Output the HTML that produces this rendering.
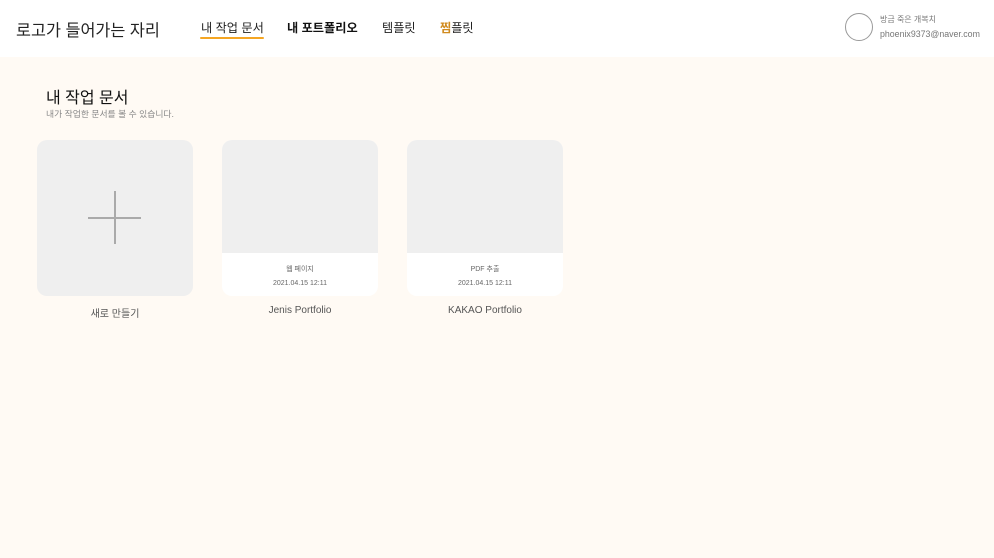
<!DOCTYPE html>
<html><head><meta charset="utf-8"><style>
*{margin:0;padding:0;box-sizing:border-box}
body{width:994px;height:558px;background:#fffaf4;font-family:"Liberation Sans","Noto Sans CJK KR",sans-serif;position:relative;overflow:hidden;color:#222}
.hdr{position:absolute;left:0;top:0;width:994px;height:57px;background:#fff}
.a{position:absolute;white-space:nowrap}
.card{position:absolute;top:140px;width:156px;height:156px;border-radius:10px;overflow:hidden;background:#fff}
.card .g{height:113px;background:#efefef}
.card .t{text-align:center;font-size:7px;color:#666;margin-top:10px;line-height:14px}
.lbl{position:absolute;top:305px;width:156px;text-align:center;font-size:10px;color:#555}
</style></head><body>
<div class="hdr"></div>
<div class="a" style="left:16px;top:17px;font-size:16.3px;color:#222">로고가 들어가는 자리</div>
<div class="a" style="left:201px;top:18px;font-size:12.2px;color:#222">내 작업 문서</div>
<div class="a" style="left:200px;top:37px;width:64px;height:2px;background:#f5a623;border-radius:1px"></div>
<div class="a" style="left:287px;top:18px;font-size:12.2px;font-weight:bold;color:#111">내 포트폴리오</div>
<div class="a" style="left:382px;top:18px;font-size:12.2px;color:#222">템플릿</div>
<div class="a" style="left:440px;top:18px;font-size:12.2px;color:#222"><span style="color:#d08a1e;font-weight:bold">찜</span>플릿</div>
<div class="a" style="left:845px;top:13px;width:28px;height:28px;border:1px solid #999;border-radius:50%"></div>
<div class="a" style="left:880px;top:14px;font-size:8px;color:#777">방금 죽은 개복치</div>
<div class="a" style="left:880px;top:29px;font-size:8.8px;color:#777">phoenix9373@naver.com</div>
<div class="a" style="left:46px;top:84px;font-size:16px;color:#111">내 작업 문서</div>
<div class="a" style="left:46px;top:107px;font-size:8.8px;color:#888">내가 작업한 문서를 볼 수 있습니다.</div>
<div class="card" style="left:37px;background:#efefef">
<div class="a" style="left:51px;top:77px;width:53px;height:1.5px;background:#aaa"></div>
<div class="a" style="left:77px;top:51px;width:1.5px;height:53px;background:#aaa"></div>
</div>
<div class="lbl" style="left:37px">새로 만들기</div>
<div class="card" style="left:222px"><div class="g"></div><div class="t">웹 페이지<br>2021.04.15 12:11</div></div>
<div class="lbl" style="left:222px">Jenis Portfolio</div>
<div class="card" style="left:407px"><div class="g"></div><div class="t">PDF 추출<br>2021.04.15 12:11</div></div>
<div class="lbl" style="left:407px">KAKAO Portfolio</div>
</body></html>
